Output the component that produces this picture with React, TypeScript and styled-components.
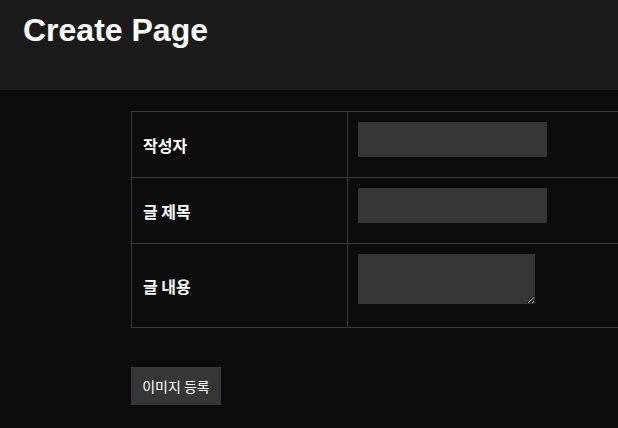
import React from 'react';
import styled, { createGlobalStyle } from 'styled-components';

const GlobalStyle = createGlobalStyle`
  html, body {
    margin: 0;
    padding: 0;
    background-color: #0c0c0c;
    overflow: hidden;
    font-family: "Liberation Sans", "Noto Sans CJK KR", Arial, sans-serif;
  }
`;

// Header
const Header = styled.header`
  height: 90px;
  background-color: #1b1b1b;
  padding: 0 23px;
  box-sizing: border-box;
`;

const Title = styled.h1`
  margin: 0;
  padding-top: 12px;
  font-size: 32px;
  font-weight: bold;
  line-height: 37px;
  color: #ffffff;
`;

// Form area
const Main = styled.main`
  padding: 21px 0 0 131px;
  width: 640px;
`;

const FormTable = styled.table`
  border-collapse: collapse;
  width: 520px;
  border: 1px solid #3a3a3a;
`;

const Row = styled.tr`
  border-bottom: 1px solid #3a3a3a;
`;

const Label = styled.th`
  width: 204px;
  padding: 0 0 0 11px;
  border-right: 1px solid #3a3a3a;
  text-align: left;
  vertical-align: middle;
  font-size: 16px;
  font-weight: bold;
  color: #ffffff;
  font-family: "Noto Sans CJK KR", sans-serif;
`;

const Field = styled.td<{ $bottom: number }>`
  padding: 10px 10px ${p => p.$bottom}px 10px;
  vertical-align: top;
`;

const TextInput = styled.input`
  display: block;
  width: 189px;
  height: 35px;
  box-sizing: border-box;
  border: none;
  background-color: #363636;
  color: #ffffff;
  outline: none;
`;

const TextArea = styled.textarea`
  display: block;
  width: 177px;
  height: 50px;
  box-sizing: border-box;
  border: none;
  background-color: #363636;
  color: #ffffff;
  outline: none;
  resize: both;
`;

const UploadButton = styled.button`
  display: block;
  margin-top: 39px;
  width: 90px;
  height: 38px;
  border: none;
  padding: 0;
  background-color: #363636;
  color: #ffffff;
  font-size: 14px;
  font-family: "Noto Sans CJK KR", sans-serif;
  cursor: pointer;
`;

const App: React.FC = () => {
  return (
    <>
      <GlobalStyle />
      <Header>
        <Title>Create Page</Title>
      </Header>
      <Main>
        <FormTable>
          <tbody>
            <Row>
              <Label>작성자</Label>
              <Field $bottom={20}>
                <TextInput type="text" />
              </Field>
            </Row>
            <Row>
              <Label>글 제목</Label>
              <Field $bottom={20}>
                <TextInput type="text" />
              </Field>
            </Row>
            <Row>
              <Label>글 내용</Label>
              <Field $bottom={23}>
                <TextArea />
              </Field>
            </Row>
          </tbody>
        </FormTable>
        <UploadButton>이미지 등록</UploadButton>
      </Main>
    </>
  );
};

export default App;
